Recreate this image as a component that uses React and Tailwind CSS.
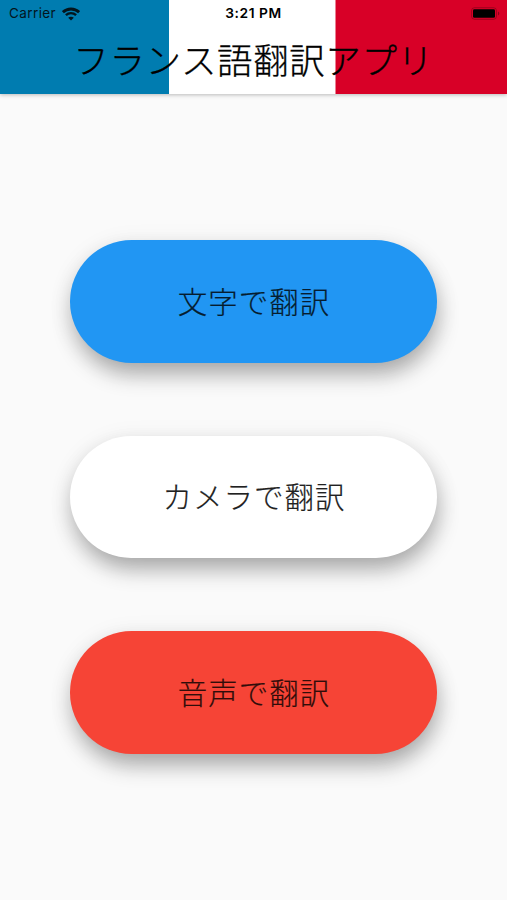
const actions = [
  { label: "文字で翻訳", tone: "bg-[#2196f3] text-[#061d2f]" },
  { label: "カメラで翻訳", tone: "bg-white text-[#212121]" },
  { label: "音声で翻訳", tone: "bg-[#f64436] text-[#300d0a]" },
];

function WifiIcon() {
  return (
    <svg className="h-[14px] w-[18px]" viewBox="0 0 18 14" fill="none" stroke="#03151d">
      <path d="M0.9 5.2C5.4 0.9 12.6 0.9 17.1 5.2" strokeWidth="2.8" />
      <path d="M3.9 8.2C6.8 5.4 11.2 5.4 14.1 8.2" strokeWidth="2.4" />
      <path d="M9 13.6L6.2 10.7C7.8 9.3 10.2 9.3 11.8 10.7Z" fill="#03151d" stroke="none" />
    </svg>
  );
}

function BatteryIcon() {
  return (
    <svg className="h-[13px] w-[30px]" viewBox="0 0 30 13" fill="none">
      <rect x="0.5" y="0.7" width="25" height="11.6" rx="3" stroke="#000" strokeOpacity="0.25" />
      <rect x="2" y="2.2" width="22" height="8.6" rx="1.4" fill="#000" />
      <path d="M27 4.5V8.5C28.8 7.8 28.8 5.2 27 4.5Z" fill="#000" fillOpacity="0.35" />
    </svg>
  );
}

export default function App() {
  return (
    <div className="flex h-[900px] w-[507px] flex-col overflow-hidden bg-[#fafafa] font-['Inter','Noto_Sans_CJK_JP',sans-serif]">
      <header className="flex h-[94px] shrink-0 flex-col bg-[linear-gradient(to_right,#007cb0_168.5px,#fff_169.5px,#fff_335px,#d80027_336px)] shadow-[0_1px_4px_rgba(0,0,0,0.26)]">
        <div className="grid h-[27px] grid-cols-3 items-center text-[13.5px] leading-none">
          <div className="flex items-center gap-[5.5px] pl-[9px] tracking-[0.4px] text-[#03151d]">
            <span className="pt-px">Carrier</span>
            <WifiIcon />
          </div>
          <span className="pt-px text-center text-[13.75px] font-semibold tracking-[0.55px] text-black">3:21 PM</span>
          <div className="flex justify-end pr-[6px]">
            <BatteryIcon />
          </div>
        </div>
        <h1 className="flex h-[67px] items-center justify-center whitespace-nowrap pb-[3px] font-['Noto_Sans_CJK_JP',sans-serif] text-[35.5px] leading-none font-light tracking-[0.6px] text-black [-webkit-text-stroke:0.3px_currentColor]">
          フランス語翻訳アプリ
        </h1>
      </header>
      <main className="flex flex-col items-center gap-[73.3px] pt-[146.3px]">
        {actions.map(({ label, tone }) => (
          <button
            key={label}
            className={`flex h-[122.3px] w-[366.5px] items-center justify-center rounded-full pb-[2px] pl-px font-['Noto_Sans_CJK_JP',sans-serif] text-[29.5px] leading-none font-light tracking-[1px] [-webkit-text-stroke:0.2px_currentColor] shadow-[2px_13px_22px_-2px_rgba(0,0,0,0.3),0_4px_24px_0_rgba(0,0,0,0.08)] ${tone}`}
          >
            {label}
          </button>
        ))}
      </main>
    </div>
  );
}
